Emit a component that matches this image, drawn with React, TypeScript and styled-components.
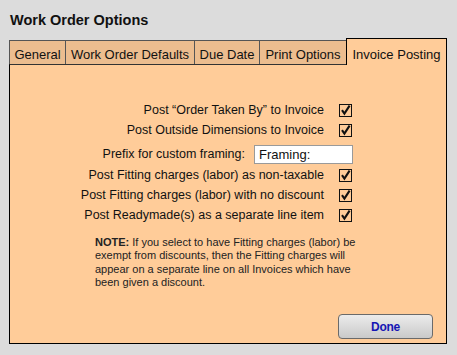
import React from "react";
import styled, { createGlobalStyle } from "styled-components";

const Global = createGlobalStyle`
  html, body { margin: 0; padding: 0; background: #dcdcdc; }
  body { font-family: "Liberation Sans", Arial, sans-serif; color: #111; }
`;

const Page = styled.div`
  width: 457px;
  height: 355px;
  padding: 0 0 0 9px;
  box-sizing: border-box;
  background: #dcdcdc;
`;

const Title = styled.h1`
  margin: 0;
  padding: 12px 0 0 1px;
  height: 38px;
  box-sizing: border-box;
  font-size: 14.5px;
  line-height: 16px;
  font-weight: bold;
  color: #111;
`;

const TabStrip = styled.div`
  display: flex;
  align-items: flex-end;
  height: 26px;
  position: relative;
  z-index: 1;
`;

const Tab = styled.div<{ $w: number; $active?: boolean }>`
  width: ${(p) => p.$w}px;
  box-sizing: border-box;
  height: ${(p) => (p.$active ? 27 : 24)}px;
  margin-bottom: ${(p) => (p.$active ? -1 : 0)}px;
  background: ${(p) => (p.$active ? "#ffcc99" : "#ecbd8f")};
  border: 1px solid ${(p) => (p.$active ? "#000" : "#555")};
  border-bottom: none;
  margin-left: -1px;
  &:first-child { margin-left: 0; }
  display: flex;
  align-items: center;
  justify-content: center;
  padding-top: ${(p) => (p.$active ? 4 : 3)}px;
  font-size: 13px;
  color: #111;
  white-space: nowrap;
  position: relative;
  z-index: ${(p) => (p.$active ? 2 : 1)};
`;

const Panel = styled.div`
  width: 438px;
  height: 280px;
  box-sizing: border-box;
  background: #ffcc99;
  border: 1px solid #000;
  border-top-color: #333;
  display: flex;
  flex-direction: column;
  padding: 35px 13px 4px 0;
`;

const Form = styled.div`
  width: 343px;
  display: flex;
  flex-direction: column;
  align-items: flex-end;
`;

const Row = styled.div<{ $h?: number; $mt?: number }>`
  height: ${(p) => p.$h ?? 20}px;
  margin-top: ${(p) => p.$mt ?? 0}px;
  display: flex;
  align-items: center;
  justify-content: flex-end;
  font-size: 12.5px;
  color: #111;
  white-space: nowrap;
`;

const Label = styled.span<{ $gap: number }>`
  margin-right: ${(p) => p.$gap}px;
`;

const Box = styled.svg`
  display: block;
  width: 13px;
  height: 13px;
  margin-right: 1px;
`;

const TextField = styled.div`
  width: 99px;
  height: 19px;
  box-sizing: border-box;
  background: #fff;
  border: 1px solid #9a9a9a;
  padding: 0 0 0 4px;
  display: flex;
  align-items: center;
  font-size: 13px;
  color: #111;
`;

const Note = styled.p`
  margin: 11px 0 0 85px;
  font-size: 11px;
  line-height: 13.3px;
  color: #222;
  white-space: nowrap;
`;

const Footer = styled.div`
  margin-top: auto;
  display: flex;
  justify-content: flex-end;
`;

const Button = styled.button`
  width: 95px;
  height: 25px;
  box-sizing: border-box;
  border: 1px solid #6a6a6a;
  border-radius: 4px;
  background: linear-gradient(#ececec, #c9c9c9);
  font-family: "Liberation Sans", Arial, sans-serif;
  font-size: 12px;
  font-weight: bold;
  letter-spacing: -0.3px;
  color: #1616b4;
  padding: 1px 0 0 0;
  cursor: pointer;
`;

const Check = () => (
  <Box viewBox="0 0 13 13">
    <rect x="0.5" y="0.5" width="12" height="12" fill="none" stroke="#111" strokeWidth="1" />
    <path d="M3 6.2 L5.4 9.6 L10.6 1.6" fill="none" stroke="#111" strokeWidth="2.1" />
  </Box>
);

const CheckRow = ({ label, mt }: { label: string; mt?: number }) => (
  <Row $mt={mt}>
    <Label $gap={15}>{label}</Label>
    <Check />
  </Row>
);

export default function App() {
  return (
    <Page>
      <Global />
      <Title>Work Order Options</Title>
      <TabStrip>
        <Tab $w={57}>General</Tab>
        <Tab $w={130}>Work Order Defaults</Tab>
        <Tab $w={66}>Due Date</Tab>
        <Tab $w={88}>Print Options</Tab>
        <Tab $w={101} $active>
          Invoice Posting
        </Tab>
      </TabStrip>
      <Panel>
        <Form>
          <CheckRow label="Post “Order Taken By” to Invoice" />
          <CheckRow label="Post Outside Dimensions to Invoice" />
          <Row $h={22} $mt={3}>
            <Label $gap={9}>Prefix for custom framing:</Label>
            <TextField>Framing:</TextField>
          </Row>
          <CheckRow label="Post Fitting charges (labor) as non-taxable" />
          <CheckRow label="Post Fitting charges (labor) with no discount" />
          <CheckRow label="Post Readymade(s) as a separate line item" />
        </Form>
        <Note>
          <b>NOTE:</b> If you select to have Fitting charges (labor) be
          <br />
          exempt from discounts, then the Fitting charges will
          <br />
          appear on a separate line on all Invoices which have
          <br />
          been given a discount.
        </Note>
        <Footer>
          <Button>Done</Button>
        </Footer>
      </Panel>
    </Page>
  );
}
